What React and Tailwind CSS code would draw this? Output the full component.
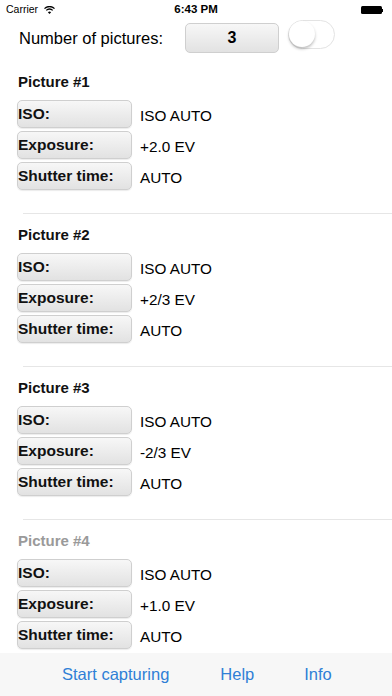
import { useState } from 'react';

const pictures = [
  { title: 'Picture #1', exposure: '+2.0 EV' },
  { title: 'Picture #2', exposure: '+2/3 EV' },
  { title: 'Picture #3', exposure: '-2/3 EV' },
  { title: 'Picture #4', exposure: '+1.0 EV', dim: true },
];

const btn =
  'flex h-[28px] w-[115px] items-center rounded-[5px] border border-[#cfcfcf] bg-gradient-to-b from-[#f7f7f7] to-[#e2e2e2] text-[15.5px] font-bold text-[#111] shadow-[0_1px_1px_rgba(0,0,0,0.08)]';

function StatusBar() {
  return (
    <div className="relative flex h-[20px] shrink-0 items-center px-[6px] text-black">
      <span className="text-[10.5px]">Carrier</span>
      <svg className="ml-[6px]" width="11" height="8" viewBox="0 0 11 8">
        <path d="M0.5 2.6 A7 7 0 0 1 10.5 2.6" fill="none" stroke="#000" strokeWidth="1.3" />
        <path d="M2.3 4.4 A4.4 4.4 0 0 1 8.7 4.4" fill="none" stroke="#000" strokeWidth="1.3" />
        <path d="M5.5 8 L3.9 6.2 A2.3 2.3 0 0 1 7.1 6.2 Z" fill="#000" />
      </svg>
      <span className="absolute left-1/2 -translate-x-1/2 text-[11.5px] font-bold">6:43 PM</span>
      <div className="ml-auto mr-[3px] flex items-center">
        <div className="h-[8px] w-[21px] rounded-[1.5px] bg-black" />
        <div className="h-[3px] w-[1.5px] bg-black" />
      </div>
    </div>
  );
}

function Toggle() {
  const [on, setOn] = useState(false);
  return (
    <button
      onClick={() => setOn(!on)}
      className={`relative h-[29px] w-[47px] rounded-full border-[1.5px] ${on ? 'border-[#4cd964] bg-[#4cd964]' : 'border-[#e3e3e3] bg-white'}`}
    >
      <span
        className={`absolute top-0 h-[26px] w-[26px] rounded-full bg-white shadow-[0_2px_3px_rgba(0,0,0,0.25)] ${on ? 'left-[18px]' : 'left-0'}`}
      />
    </button>
  );
}

function PictureBlock({ pic, last }) {
  const rows = [
    ['ISO:', 'ISO AUTO'],
    ['Exposure:', pic.exposure],
    ['Shutter time:', 'AUTO'],
  ];
  return (
    <div className="flex flex-col">
      <div className={`h-[20px] pl-[18px] text-[15px] font-bold leading-[20px] ${pic.dim ? 'text-[#9a9a9a]' : 'text-[#111]'}`}>
        {pic.title}
      </div>
      <div className="mt-[8px] flex flex-col gap-[3px] pl-[17px]">
        {rows.map(([label, value]) => (
          <div key={label} className="flex items-center">
            <button className={btn}>{label}</button>
            <span className="ml-[8px] pt-[4px] text-[15.3px] text-black">{value}</span>
          </div>
        ))}
      </div>
      {!last && <div className="ml-[23px] mt-[23px] mb-[11px] h-px bg-[#e6e6e6]" />}
    </div>
  );
}

export default function App() {
  return (
    <div
      className="flex h-[696px] w-[392px] flex-col overflow-hidden bg-white"
      style={{ fontFamily: '"Liberation Sans", Arial, sans-serif' }}
    >
      <StatusBar />
      <div className="flex-1 overflow-hidden">
        <div className="flex h-[36px] items-start pt-[1px]">
          <span className="ml-[19px] mt-[5px] text-[16.5px] text-black">Number of pictures:</span>
          <button className="ml-[22px] mt-[2px] flex h-[30px] w-[94px] items-center justify-center rounded-[5px] border border-[#cfcfcf] bg-gradient-to-b from-[#f7f7f7] to-[#e2e2e2] text-[16px] font-bold text-black">
            3
          </button>
          <div className="ml-[9px] mt-[-1px]">
            <Toggle />
          </div>
        </div>
        <div className="mt-[16px] flex flex-col">
          {pictures.map((p, i) => (
            <PictureBlock key={p.title} pic={p} last={i === pictures.length - 1} />
          ))}
        </div>
      </div>
      <div className="flex h-[43px] shrink-0 items-center bg-[#f7f7f7] text-[16.5px] text-[#2f7fd6]">
        <span className="ml-[62px]">Start capturing</span>
        <span className="ml-[51px]">Help</span>
        <span className="ml-[50px]">Info</span>
      </div>
    </div>
  );
}
